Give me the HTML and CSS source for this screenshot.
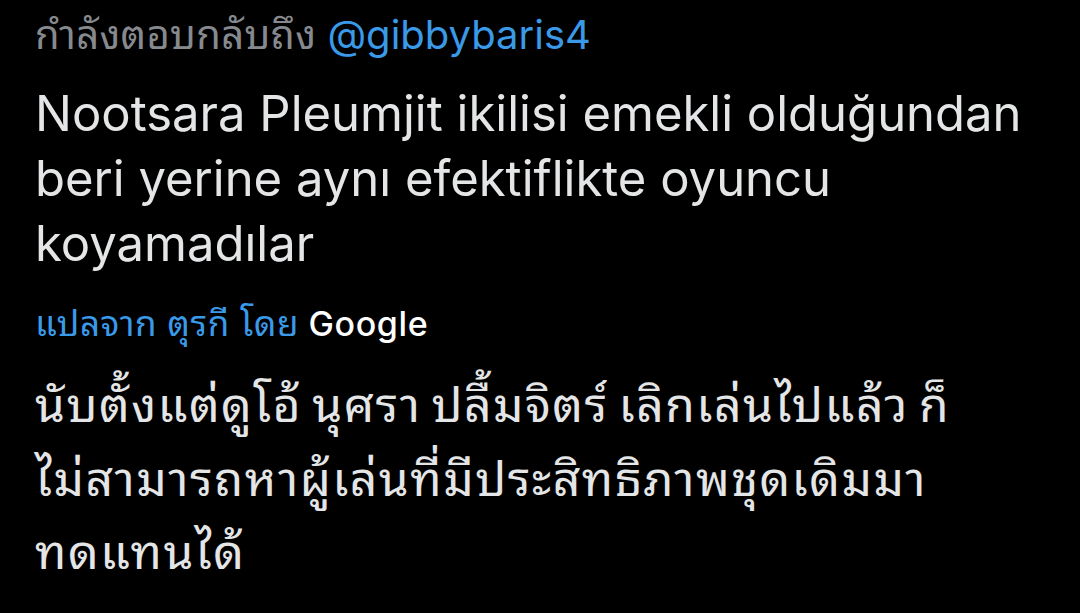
FILE: index.html
```html
<!DOCTYPE html>
<html lang="th">
<head>
<meta charset="utf-8">
<link rel="stylesheet" href="styles.css">
</head>
<body>
<main class="tweet">
  <div class="reply"><span class="thai-reply">กำลังตอบกลับถึง</span> <span class="handle">@gibbybaris4</span></div>
  <div class="original">
    <span class="line">Nootsara Pleumjit ikilisi emekli olduğundan</span>
    <span class="line">beri yerine aynı efektiflikte oyuncu</span>
    <span class="line">koyamadılar</span>
  </div>
  <div class="translated-by"><span class="thai-label">แปลจาก ตุรกี โดย</span> <span class="google">Google</span></div>
  <div class="translation">
    <span class="line">นับตั้งแต่ดูโอ้ นุศรา ปลื้มจิตร์ เลิกเล่นไปแล้ว ก็</span>
    <span class="line">ไม่สามารถหาผู้เล่นที่มีประสิทธิภาพชุดเดิมมา</span>
    <span class="line">ทดแทนได้</span>
  </div>
</main>
</body>
</html>
```

FILE: styles.css
```css
html, body {
  margin: 0;
  padding: 0;
  background: #000;
}
body {
  width: 1080px;
  height: 613px;
  overflow: hidden;
  font-family: "Inter", "Noto Sans Thai Looped", "Roboto", sans-serif;
}
.tweet {
  padding: 9px 0 0 35px;
  display: flex;
  flex-direction: column;
}
.reply {
  font-size: 40px;
  line-height: 52px;
  color: #868a8e;
}
.thai-reply {
  letter-spacing: 0.3px;
}
.handle {
  color: #3a9ae8;
}
.original {
  margin-top: 20px;
  font-size: 49px;
  line-height: 65px;
  color: #e3e5e6;
}
.line {
  display: block;
  white-space: nowrap;
}
.translated-by {
  margin-top: 25px;
  font-size: 34px;
  line-height: 44px;
  color: #3a9ae8;
}
.thai-label {
  font-size: 35px;
  letter-spacing: 0.6px;
}
.google {
  color: #fff;
  font-weight: 500;
  letter-spacing: 0.6px;
}
.translation {
  margin-top: 22px;
  font-size: 48px;
  line-height: 73.5px;
  letter-spacing: 1.5px;
  word-spacing: -5px;
  color: #e3e5e6;
}
```
